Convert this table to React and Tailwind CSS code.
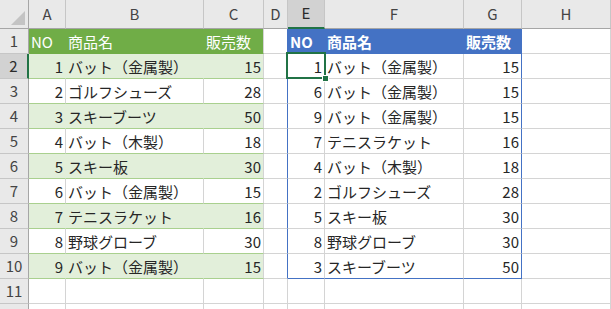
import React from "react";

const COLS = ["A", "B", "C", "D", "E", "F", "G", "H"];

const products = [
  [1, "バット（金属製）", 15],
  [2, "ゴルフシューズ", 28],
  [3, "スキーブーツ", 50],
  [4, "バット（木製）", 18],
  [5, "スキー板", 30],
  [6, "バット（金属製）", 15],
  [7, "テニスラケット", 16],
  [8, "野球グローブ", 30],
  [9, "バット（金属製）", 15],
];

// sales ascending; ties keep the order the sheet lists them in
const sortedRows = [
  products[0],
  products[5],
  products[8],
  products[6],
  products[3],
  products[1],
  products[4],
  products[7],
  products[2],
];

const FONT = "font-['Yu_Gothic','Noto_Sans_CJK_JP','Noto_Sans',sans-serif]";

function ColumnHeader({ label, active }) {
  return (
    <div
      className={
        active
          ? "flex items-center justify-center bg-[#d2d2d2] border-r border-r-[#c6c6c6] border-b-2 border-b-[#217346] text-[15px] text-[#2b2b2b]"
          : "flex items-center justify-center bg-[#e9e9e9] border-r border-r-[#c6c6c6] border-b border-b-[#a6a6a6] text-[15px] text-[#444]"
      }
    >
      {label}
    </div>
  );
}

function RowHeader({ n, active }) {
  return (
    <div
      className={
        active
          ? "flex items-center justify-center bg-[#d2d2d2] border-r-2 border-r-[#217346] border-b border-b-[#c6c6c6] text-[15px] text-[#2b2b2b]"
          : "flex items-center justify-center bg-[#e9e9e9] border-r border-r-[#a6a6a6] border-b border-b-[#c6c6c6] text-[15px] text-[#444]"
      }
    >
      {n}
    </div>
  );
}

function cellClass(r, c) {
  // left table: A..C, rows 1..10 (green banded)
  if (c <= 2 && r >= 1 && r <= 10) {
    if (r === 1) {
      return c < 2
        ? "bg-[#70ad47] text-white border-r border-r-[#70ad47] border-b border-b-[#70ad47]"
        : "bg-[#70ad47] text-white border-r border-r-[#d4d4d4] border-b border-b-[#70ad47]";
    }
    if (r % 2 === 0) {
      return c < 2
        ? "bg-[#e2efda] text-[#262626] border-r border-r-[#e2efda] border-b border-b-[#a9d08e]"
        : "bg-[#e2efda] text-[#262626] border-r border-r-[#d4d4d4] border-b border-b-[#a9d08e]";
    }
    return "bg-white text-[#262626] border-r border-r-[#d4d4d4] border-b border-b-[#a9d08e]";
  }
  // spacer column D bordering the blue table
  if (c === 3 && r >= 1 && r <= 10) {
    return "bg-white border-r border-r-[#4472c4] border-b border-b-[#d4d4d4]";
  }
  // right table: E..G, rows 1..10 (blue header, outlined)
  if (c >= 4 && c <= 6 && r >= 1 && r <= 10) {
    if (r === 1) {
      return "bg-[#4472c4] text-white font-bold border-r border-r-[#4472c4] border-b border-b-[#4472c4]";
    }
    if (r === 10) {
      return c === 6
        ? "bg-white text-[#262626] border-r border-r-[#4472c4] border-b border-b-[#4472c4]"
        : "bg-white text-[#262626] border-r border-r-[#d4d4d4] border-b border-b-[#4472c4]";
    }
    return c === 6
      ? "bg-white text-[#262626] border-r border-r-[#4472c4] border-b border-b-[#d4d4d4]"
      : "bg-white text-[#262626] border-r border-r-[#d4d4d4] border-b border-b-[#d4d4d4]";
  }
  return "bg-white border-r border-r-[#d4d4d4] border-b border-b-[#d4d4d4]";
}

function cellValue(r, c) {
  if (r === 1) {
    if (c === 0 || c === 4) return { text: "NO", align: "left" };
    if (c === 1 || c === 5) return { text: "商品名", align: "left" };
    if (c === 2 || c === 6) return { text: "販売数", align: "left" };
    return null;
  }
  if (r >= 2 && r <= 10) {
    const i = r - 2;
    if (c <= 2) {
      const row = products[i];
      return { text: String(row[c]), align: c === 1 ? "left" : "right" };
    }
    if (c >= 4 && c <= 6) {
      const row = sortedRows[i];
      return { text: String(row[c - 4]), align: c === 5 ? "left" : "right" };
    }
  }
  return null;
}

function Cell({ r, c }) {
  const v = cellValue(r, c);
  const base = cellClass(r, c);
  let inner = null;
  if (v) {
    inner =
      v.align === "right" ? (
        <span className="ml-auto pr-[2px]">{v.text}</span>
      ) : (
        <span className="pl-[2px]">{v.text}</span>
      );
  }
  return (
    <div className={"flex items-center overflow-hidden whitespace-nowrap text-[15px] leading-none " + base}>
      {inner}
    </div>
  );
}

export default function App() {
  const rows = Array.from({ length: 11 }, (_, i) => i + 1);
  return (
    <div className={"relative w-[611px] h-[309px] overflow-hidden bg-white " + FONT}>
      <div className="grid grid-cols-[29px_37px_138px_60px_24px_37px_139px_58px_1fr] grid-rows-[29px_repeat(12,25px)]">
        {/* select-all corner */}
        <div className="relative bg-[#e9e9e9] border-r border-r-[#a6a6a6] border-b border-b-[#a6a6a6]">
          <svg className="absolute right-[3px] bottom-[3px]" width="14" height="14" viewBox="0 0 14 14">
            <polygon points="14,0 14,14 0,14" fill="#c4c4c4" />
          </svg>
        </div>
        {COLS.map((l) => (
          <ColumnHeader key={l} label={l} active={l === "E"} />
        ))}
        {rows.map((r) => (
          <React.Fragment key={r}>
            <RowHeader n={r} active={r === 2} />
            {COLS.map((l, c) => (
              <Cell key={l} r={r} c={c} />
            ))}
          </React.Fragment>
        ))}
        {/* next row, scrolled mostly out of view */}
        <div className="bg-[#e9e9e9] border-r border-r-[#a6a6a6]" />
        {COLS.map((l) => (
          <div key={l} className="bg-white border-r border-r-[#d4d4d4]" />
        ))}
      </div>
      {/* active cell E2 */}
      <div className="absolute left-[286px] top-[52px] w-[40px] h-[27px] border-2 border-[#217346]">
        <div className="absolute right-[-5px] bottom-[-5px] w-[7px] h-[7px] bg-[#217346] border border-white" />
      </div>
    </div>
  );
}
